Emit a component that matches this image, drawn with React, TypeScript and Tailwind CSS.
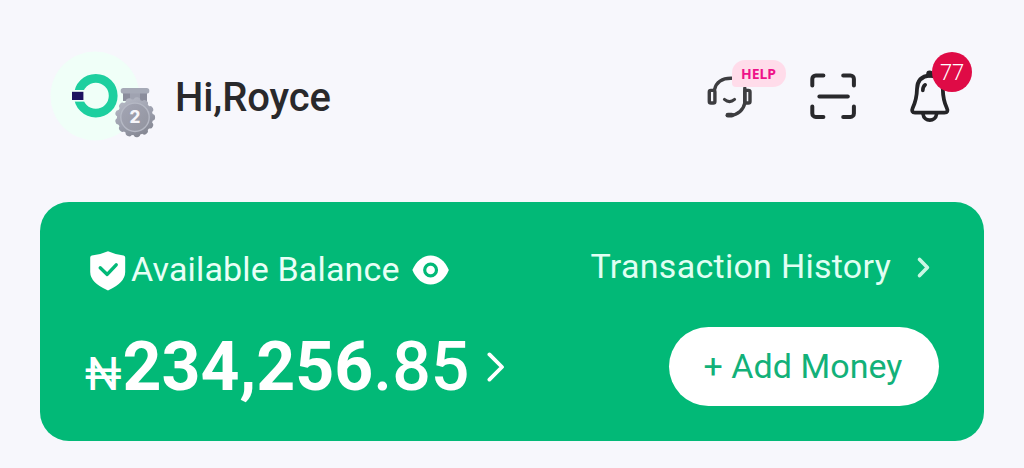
const AvatarLogo = () => (
  <svg width="108" height="92" viewBox="50 50 108 92" className="shrink-0">
    <defs>
      <linearGradient id="medal" gradientUnits="userSpaceOnUse" x1="125" y1="97" x2="145" y2="137">
        <stop offset="0" stopColor="#b6b9c5" />
        <stop offset="0.55" stopColor="#9b9eac" />
        <stop offset="1" stopColor="#82848f" />
      </linearGradient>
      <linearGradient id="disc" x1="0" y1="0" x2="1" y2="1">
        <stop offset="0" stopColor="#a3a5b4" />
        <stop offset="1" stopColor="#92949f" />
      </linearGradient>
    </defs>
    <circle cx="95" cy="96" r="44.5" fill="#f0fff8" />
    <circle cx="95.8" cy="95.7" r="17.4" fill="none" stroke="#1dcf9f" strokeWidth="8.8" />
    <rect x="71" y="90" width="13.2" height="11.6" fill="#f0fff8" />
    <rect x="72" y="91.8" width="11.4" height="8.2" fill="#1d1160" />
    {/* medal */}
    <rect x="123" y="91" width="24" height="10" fill="#8b8d9c" />
    <rect x="130" y="91" width="10" height="10" fill="#a0a3b1" />
    <rect x="120.7" y="88" width="28.6" height="5.6" rx="2.6" fill="#a6aab7" />
    <circle cx="135" cy="117.3" r="18" fill="url(#medal)" />
    <circle
      cx="135"
      cy="117.3"
      r="16.8"
      fill="none"
      stroke="url(#medal)"
      strokeWidth="6.6"
      strokeLinecap="round"
      strokeDasharray="0.1 8.02"
      pathLength="105.56"
    />
    <circle cx="135" cy="117.3" r="14.2" fill="url(#disc)" stroke="#b5b8c4" strokeWidth="1.4" />
    <text x="134.8" y="123" textAnchor="middle" fontSize="17" fontWeight="800" fill="#f6f6fa" fontFamily="Inter, sans-serif">
      2
    </text>
  </svg>
)

const HeadsetIcon = () => (
  <svg width="48" height="46" viewBox="706 75 48 46" fill="none" stroke="#3d3d40" strokeWidth="3.4" strokeLinecap="round">
    <rect x="709.3" y="90.4" width="5.6" height="12.6" rx="1.6" />
    <rect x="744.8" y="90.4" width="5.2" height="12.6" rx="1.6" />
    <path d="M714.6 89.5C716 82.5 722 78 731.5 78.2" />
    <path d="M744.8 88v15C743.6 109.5 738 115 730.5 115.3" />
    <path d="M727.9 115.2h3.8" strokeWidth="4.8" />
    <path d="M724.4 99.4Q729.5 103.8 734.6 99.4" strokeWidth="3" />
  </svg>
)

const ScanIcon = () => (
  <svg width="46" height="46" viewBox="810 73 46 46" fill="none" stroke="#29292c" strokeWidth="4" strokeLinecap="round" strokeLinejoin="round">
    <path d="M812.3 85.6V79a3.5 3.5 0 0 1 3.5-3.5h7.6" />
    <path d="M843.2 75.5h7.2a3.5 3.5 0 0 1 3.5 3.5v6.6" />
    <path d="M812.3 106.4v7a3.5 3.5 0 0 0 3.5 3.5h7.6" />
    <path d="M843.2 116.9h7.2a3.5 3.5 0 0 0 3.5-3.5v-7" />
    <path d="M819.4 96.5h28.4" />
  </svg>
)

const BellIcon = () => (
  <svg width="42" height="54" viewBox="909 70 42 54" fill="none" stroke="#242427" strokeWidth="3.8" strokeLinecap="round" strokeLinejoin="round">
    <path d="M929.8 75.5C920.5 76.2 917.2 82 917 89C916.8 98 915.5 102 912.7 108C911.4 110.8 912.4 112.6 915 112.6H944.4C947.4 112.6 948.2 110.8 946.8 108C944.2 102.5 943 98 942.8 89C942.6 82 939 76.2 929.8 75.5Z" />
    <circle cx="929.6" cy="74" r="3.4" fill="#242427" stroke="none" />
    <path d="M922.8 90.4C922.8 88 923.6 86 925.2 84.8" strokeWidth="3.6" />
    <path d="M923 114C924 122.2 935.6 122.2 936.6 114" strokeWidth="3.6" />
  </svg>
)

const ShieldIcon = () => (
  <svg width="36" height="40" viewBox="0 0 36 40" fill="none">
    <path d="M18 0.3Q25 3.6 33.6 4.4Q35.2 4.8 35.2 6.4V21Q35 32 18 39.4Q0.3 32 0.2 21V6.4Q0.2 4.8 1.8 4.4Q11 3.6 18 0.3Z" fill="#fff" />
    <path d="M10.2 16.8L17.2 23.4L26.2 13.8" stroke="#02b977" strokeWidth="3.4" strokeLinecap="round" strokeLinejoin="round" />
  </svg>
)

const EyeIcon = () => (
  <svg width="38" height="30" viewBox="0 0 38 30" fill="none">
    <path d="M0.4 15C4 6 11 0.4 18.6 0.4S33.4 6 36.8 15C33.4 24 26.4 29.6 18.6 29.6S4 24 0.4 15Z" fill="#fff" />
    <circle cx="18.6" cy="15" r="5.9" stroke="#02b977" strokeWidth="3.2" />
  </svg>
)

const App = () => {
  return (
    <main className="h-[468px] w-[1024px] overflow-hidden bg-[#f7f7fc] px-10 font-['Roboto',sans-serif]">
      <header className="flex h-[202px] items-start justify-between pt-[50px] pl-[10px]">
        <div className="flex items-start">
          <AvatarLogo />
          <h1 className="mt-[28px] ml-[17px] text-[40px] leading-none font-medium tracking-[-0.1px] whitespace-nowrap text-[#29292b]">
            Hi,Royce
          </h1>
        </div>

        <div className="mr-[33px] flex items-start">
          <div className="relative mt-[25px] mr-[56px]">
            <HeadsetIcon />
            <span className="absolute -top-[15px] left-[26px] flex h-[27px] w-[54px] items-center justify-center rounded-[13px] rounded-bl-[4px] bg-[#ffdcea] pr-[1px] font-['Noto_Sans',sans-serif] text-[14px] font-bold text-[#ee1289]">
              HELP
            </span>
          </div>
          <div className="mt-[23px] mr-[53px]">
            <ScanIcon />
          </div>
          <div className="relative mt-[20px]">
            <BellIcon />
            <span className="absolute -top-[18px] left-[23px] flex size-[40px] items-center justify-center rounded-full bg-[#df0b46] text-[22px] font-light tracking-[-0.1px] text-white">
              77
            </span>
          </div>
        </div>
      </header>

      <section className="flex h-[239px] justify-between rounded-[29px] bg-[#02b977] text-white">
        <div className="pt-[49px] pl-[50px]">
          <div className="flex items-start">
            <ShieldIcon />
            <span className="mt-[1px] ml-[5px] text-[34px] leading-none tracking-[0.16px] whitespace-nowrap text-[#e8fff6]">
              Available Balance
            </span>
            <div className="mt-[4px] ml-[12px]">
              <EyeIcon />
            </div>
          </div>
          <div className="-ml-[5px] mt-[42px] flex items-baseline leading-none whitespace-nowrap">
            <span className="text-[46px]">₦</span>
            <span className="ml-[1px] text-[68px] font-bold">234,256</span>
            <span className="text-[68px] font-medium">.85</span>
            <svg width="18" height="30" viewBox="0 0 18 30" fill="none" className="ml-[18px] -translate-y-[8px]">
              <path d="M2.4 2.4L15 15L2.4 27.6" stroke="#fff" strokeWidth="3.8" strokeLinecap="round" strokeLinejoin="round" />
            </svg>
          </div>
        </div>

        <div className="flex flex-col items-end pt-[47px] pr-[45px]">
          <div className="mr-[9px] flex items-start">
            <span className="text-[34px] leading-none tracking-[0.28px] whitespace-nowrap text-[#e0fff3]">
              Transaction History
            </span>
            <svg width="13" height="21" viewBox="0 0 13 21" fill="none" className="mt-[8px] ml-[26px]">
              <path d="M2.6 2.4L10.4 10.5L2.6 18.6" stroke="#c9f7e4" strokeWidth="3.6" strokeLinecap="round" strokeLinejoin="round" />
            </svg>
          </div>
          <button className="mt-[44px] h-[79px] w-[270px] rounded-full bg-white pr-[2px] text-[34px] tracking-[0.05px] whitespace-nowrap text-[#12b179]">
            + Add Money
          </button>
        </div>
      </section>
    </main>
  )
}

export default App
